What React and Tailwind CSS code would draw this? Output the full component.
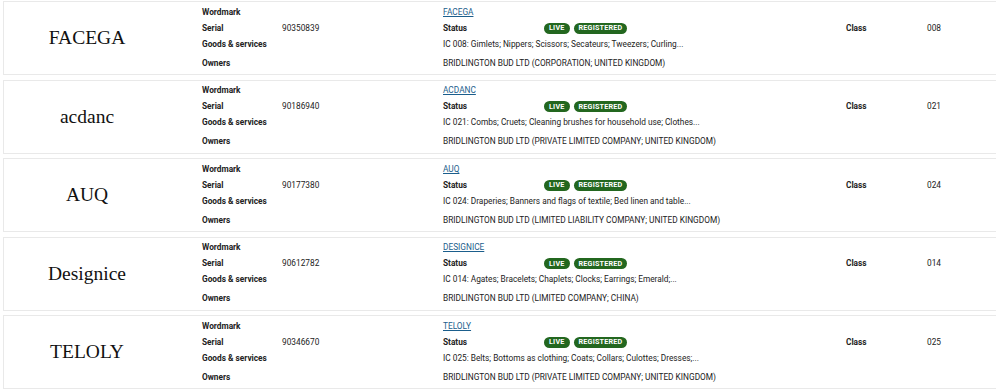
import React from 'react';

const marks = [
  {
    logo: 'FACEGA',
    serial: '90350839',
    name: 'FACEGA',
    goods: 'IC 008: Gimlets; Nippers; Scissors; Secateurs; Tweezers; Curling...',
    owner: 'BRIDLINGTON BUD LTD (CORPORATION; UNITED KINGDOM)',
    cls: '008',
  },
  {
    logo: 'acdanc',
    serial: '90186940',
    name: 'ACDANC',
    goods: 'IC 021: Combs; Cruets; Cleaning brushes for household use; Clothes...',
    owner: 'BRIDLINGTON BUD LTD (PRIVATE LIMITED COMPANY; UNITED KINGDOM)',
    cls: '021',
  },
  {
    logo: 'AUQ',
    serial: '90177380',
    name: 'AUQ',
    goods: 'IC 024: Draperies; Banners and flags of textile; Bed linen and table...',
    owner: 'BRIDLINGTON BUD LTD (LIMITED LIABILITY COMPANY; UNITED KINGDOM)',
    cls: '024',
  },
  {
    logo: 'Designice',
    serial: '90612782',
    name: 'DESIGNICE',
    goods: 'IC 014: Agates; Bracelets; Chaplets; Clocks; Earrings; Emerald;...',
    owner: 'BRIDLINGTON BUD LTD (LIMITED COMPANY; CHINA)',
    cls: '014',
  },
  {
    logo: 'TELOLY',
    serial: '90346670',
    name: 'TELOLY',
    goods: 'IC 025: Belts; Bottoms as clothing; Coats; Collars; Culottes; Dresses;...',
    owner: 'BRIDLINGTON BUD LTD (PRIVATE LIMITED COMPANY; UNITED KINGDOM)',
    cls: '025',
  },
];

const Badge = ({ children }) => (
  <span className="inline-flex items-center h-[11px] px-[5px] rounded-full bg-[#23671f] text-white text-[7.2px] font-bold leading-none tracking-[0.2px]">
    {children}
  </span>
);

const MarkCard = ({ mark }) => (
  <div className="flex h-[74px] w-[1010px] border border-[#e9e9e9] bg-white">
    <div className="w-[166px] flex items-center justify-center">
      <span className="font-['Liberation_Serif',serif] text-[19.5px] text-[#111]">
        {mark.logo}
      </span>
    </div>

    <div className="ml-[32px] pt-[2px] text-[8.3px] text-[#222] font-['Roboto',sans-serif]">
      <div className="flex h-[16px] items-center">
        <span className="w-[80px] font-bold">Wordmark</span>
        <span className="w-[161px]"></span>
        <a className="text-[#1b5e8c] underline">{mark.name}</a>
      </div>

      <div className="flex h-[16px] items-center">
        <span className="w-[80px] font-bold">Serial</span>
        <span className="w-[161px]">{mark.serial}</span>
        <span className="w-[101px] font-bold">Status</span>
        <div className="w-[302px] flex gap-[4px]">
          <Badge>LIVE</Badge>
          <Badge>REGISTERED</Badge>
        </div>
        <span className="w-[81px] font-bold">Class</span>
        <span>{mark.cls}</span>
      </div>

      <div className="flex h-[16px] items-center">
        <span className="w-[241px] font-bold">Goods &amp; services</span>
        <span>{mark.goods}</span>
      </div>

      <div className="flex h-[16px] items-center mt-[3px]">
        <span className="w-[241px] font-bold">Owners</span>
        <span>{mark.owner}</span>
      </div>
    </div>
  </div>
);

export default function App() {
  return (
    <div className="w-[996px] h-[389px] overflow-hidden bg-white pl-[3px] pt-[1px] flex flex-col gap-[4.5px]">
      {marks.map((m) => (
        <MarkCard key={m.serial} mark={m} />
      ))}
    </div>
  );
}
